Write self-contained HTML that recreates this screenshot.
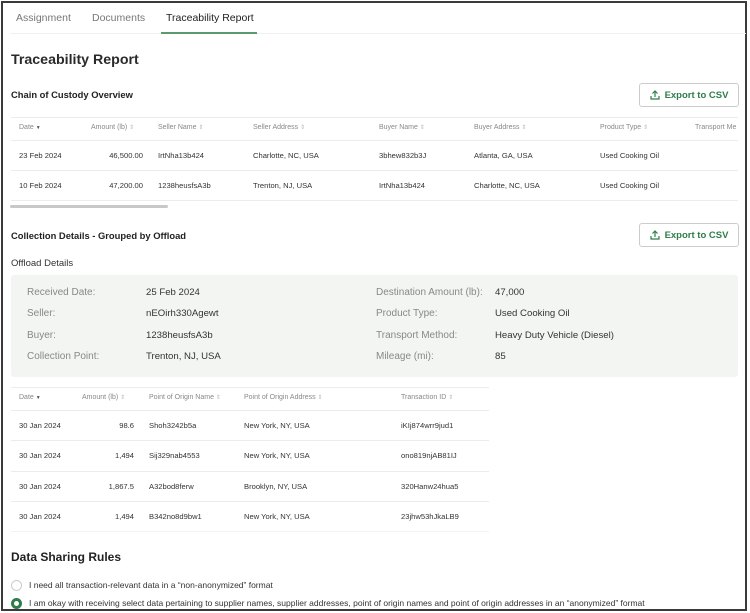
<!DOCTYPE html>
<html><head><meta charset="utf-8"><style>
*{margin:0;padding:0;box-sizing:border-box}
body{width:750px;height:613px;background:#fff;font-family:"Liberation Sans",sans-serif;color:#222;position:relative;overflow:hidden}
.frame{position:absolute;left:1px;top:1px;width:746px;height:610px;border:2px solid #3a3a3a}
.a{position:absolute;white-space:nowrap}
.tab{font-size:10.5px;color:#777;top:12px}
.h1{font-size:14.2px;font-weight:bold;color:#2a2a2a}
.h2{font-size:9.4px;font-weight:bold;color:#222}
.btn{position:absolute;left:639px;width:100px;height:24px;border:1px solid #ccc;border-radius:3px;color:#2e7d4a;font-size:9.5px;font-weight:bold;display:flex;align-items:center;justify-content:center;gap:5px}
.line{position:absolute;height:1px;background:#ececec}
.th{font-size:7px;color:#888}
.td{font-size:7.6px;color:#333}
.srt{color:#bbb;font-size:6px}
.lbl{font-size:10px;color:#888}
.val{font-size:9.6px;color:#333}
.radio{position:absolute;left:11px;width:11px;height:11px;border-radius:50%}
</style></head><body>
<div class="frame"></div>
<div class="a tab" style="left:16px">Assignment</div>
<div class="a tab" style="left:92px">Documents</div>
<div class="a tab" style="left:166px;color:#222">Traceability Report</div>
<div class="line" style="left:10px;width:736px;top:33px;background:#f0f0f0"></div>
<div style="position:absolute;left:161px;top:32px;width:96px;height:2px;background:#5a9a70"></div>

<div class="a h1" style="left:11px;top:52px">Traceability Report</div>
<div class="a h2" style="left:11px;top:89px">Chain of Custody Overview</div>
<div class="btn" style="top:83px"><svg width="10" height="10" viewBox="0 0 10 10" fill="none" stroke="#2e7d4a" stroke-width="1.2"><path d="M5 7V1M2.5 3.5L5 1l2.5 2.5M1 6v3h8V6"/></svg>Export to CSV</div>

<div class="line" style="left:11px;width:727px;top:117px"></div>
<div class="a th" style="left:19px;top:124px">Date <span style="font-size:5px;color:#555">▼</span></div>
<div class="a th" style="left:91px;top:124px">Amount (lb) <span class="srt">⇕</span></div>
<div class="a th" style="left:158px;top:124px">Seller Name <span class="srt">⇕</span></div>
<div class="a th" style="left:253px;top:124px">Seller Address <span class="srt">⇕</span></div>
<div class="a th" style="left:379px;top:124px">Buyer Name <span class="srt">⇕</span></div>
<div class="a th" style="left:474px;top:124px">Buyer Address <span class="srt">⇕</span></div>
<div class="a th" style="left:600px;top:124px">Product Type <span class="srt">⇕</span></div>
<div class="a th" style="left:695px;top:124px">Transport Me</div>
<div class="line" style="left:11px;width:727px;top:140px"></div>
<div class="a td" style="left:19px;top:151px">23 Feb 2024</div>
<div class="a td" style="left:90px;top:151px;width:53px;text-align:right">46,500.00</div>
<div class="a td" style="left:158px;top:151px">IrtNha13b424</div>
<div class="a td" style="left:253px;top:151px">Charlotte, NC, USA</div>
<div class="a td" style="left:379px;top:151px">3bhew832b3J</div>
<div class="a td" style="left:474px;top:151px">Atlanta, GA, USA</div>
<div class="a td" style="left:600px;top:151px">Used Cooking Oil</div>
<div class="line" style="left:11px;width:727px;top:170px"></div>
<div class="a td" style="left:19px;top:181px">10 Feb 2024</div>
<div class="a td" style="left:90px;top:181px;width:53px;text-align:right">47,200.00</div>
<div class="a td" style="left:158px;top:181px">1238heusfsA3b</div>
<div class="a td" style="left:253px;top:181px">Trenton, NJ, USA</div>
<div class="a td" style="left:379px;top:181px">IrtNha13b424</div>
<div class="a td" style="left:474px;top:181px">Charlotte, NC, USA</div>
<div class="a td" style="left:600px;top:181px">Used Cooking Oil</div>
<div class="line" style="left:11px;width:727px;top:200px"></div>
<div style="position:absolute;left:10px;top:205px;width:158px;height:3px;border-radius:2px;background:#c8c8c8"></div>

<div class="a h2" style="left:11px;top:230px">Collection Details - Grouped by Offload</div>
<div class="btn" style="top:223px"><svg width="10" height="10" viewBox="0 0 10 10" fill="none" stroke="#2e7d4a" stroke-width="1.2"><path d="M5 7V1M2.5 3.5L5 1l2.5 2.5M1 6v3h8V6"/></svg>Export to CSV</div>
<div class="a" style="left:11px;top:258px;font-size:9.5px;color:#333">Offload Details</div>

<div style="position:absolute;left:11px;top:275px;width:727px;height:102px;background:#f3f5f3;border-radius:3px"></div>
<div class="a lbl" style="left:27px;top:287px">Received Date:</div><div class="a val" style="left:146px;top:287px">25 Feb 2024</div>
<div class="a lbl" style="left:27px;top:308px">Seller:</div><div class="a val" style="left:146px;top:308px">nEOirh330Agewt</div>
<div class="a lbl" style="left:27px;top:330px">Buyer:</div><div class="a val" style="left:146px;top:330px">1238heusfsA3b</div>
<div class="a lbl" style="left:27px;top:351px">Collection Point:</div><div class="a val" style="left:146px;top:351px">Trenton, NJ, USA</div>
<div class="a lbl" style="left:376px;top:287px">Destination Amount (lb):</div><div class="a val" style="left:495px;top:287px">47,000</div>
<div class="a lbl" style="left:376px;top:308px">Product Type:</div><div class="a val" style="left:495px;top:308px">Used Cooking Oil</div>
<div class="a lbl" style="left:376px;top:330px">Transport Method:</div><div class="a val" style="left:495px;top:330px">Heavy Duty Vehicle (Diesel)</div>
<div class="a lbl" style="left:376px;top:351px">Mileage (mi):</div><div class="a val" style="left:495px;top:351px">85</div>

<div class="line" style="left:11px;width:478px;top:387px"></div>
<div class="a th" style="left:19px;top:394px">Date <span style="font-size:5px;color:#555">▼</span></div>
<div class="a th" style="left:82px;top:394px">Amount (lb) <span class="srt">⇕</span></div>
<div class="a th" style="left:149px;top:394px">Point of Origin Name <span class="srt">⇕</span></div>
<div class="a th" style="left:244px;top:394px">Point of Origin Address <span class="srt">⇕</span></div>
<div class="a th" style="left:401px;top:394px">Transaction ID <span class="srt">⇕</span></div>
<div class="line" style="left:11px;width:478px;top:410px"></div>
<div class="a td" style="left:19px;top:421px">30 Jan 2024</div><div class="a td" style="left:90px;top:421px;width:44px;text-align:right">98.6</div><div class="a td" style="left:149px;top:421px">Shoh3242b5a</div><div class="a td" style="left:244px;top:421px">New York, NY, USA</div><div class="a td" style="left:401px;top:421px">iKIj874wrr9jud1</div>
<div class="line" style="left:11px;width:478px;top:440px"></div>
<div class="a td" style="left:19px;top:451px">30 Jan 2024</div><div class="a td" style="left:90px;top:451px;width:44px;text-align:right">1,494</div><div class="a td" style="left:149px;top:451px">Sij329nab4553</div><div class="a td" style="left:244px;top:451px">New York, NY, USA</div><div class="a td" style="left:401px;top:451px">ono819njAB81IJ</div>
<div class="line" style="left:11px;width:478px;top:471px"></div>
<div class="a td" style="left:19px;top:482px">30 Jan 2024</div><div class="a td" style="left:90px;top:482px;width:44px;text-align:right">1,867.5</div><div class="a td" style="left:149px;top:482px">A32bod8ferw</div><div class="a td" style="left:244px;top:482px">Brooklyn, NY, USA</div><div class="a td" style="left:401px;top:482px">320Hanw24hua5</div>
<div class="line" style="left:11px;width:478px;top:501px"></div>
<div class="a td" style="left:19px;top:512px">30 Jan 2024</div><div class="a td" style="left:90px;top:512px;width:44px;text-align:right">1,494</div><div class="a td" style="left:149px;top:512px">B342no8d9bw1</div><div class="a td" style="left:244px;top:512px">New York, NY, USA</div><div class="a td" style="left:401px;top:512px">23jhw53hJkaLB9</div>
<div class="line" style="left:11px;width:478px;top:531px;background:#f3f3f3"></div>

<div class="a" style="left:11px;top:550px;font-size:12px;font-weight:bold;color:#222">Data Sharing Rules</div>
<div class="radio" style="top:580px;border:1px solid #ccc"></div>
<div class="a" style="left:29px;top:580px;font-size:8.5px;color:#333">I need all transaction-relevant data in a “non-anonymized” format</div>
<div class="radio" style="top:598px;border:3px solid #2e7d4a"></div>
<div class="a" style="left:29px;top:598px;font-size:8.5px;color:#333">I am okay with receiving select data pertaining to supplier names, supplier addresses, point of origin names and point of origin addresses in an “anonymized” format</div>
</body></html>
